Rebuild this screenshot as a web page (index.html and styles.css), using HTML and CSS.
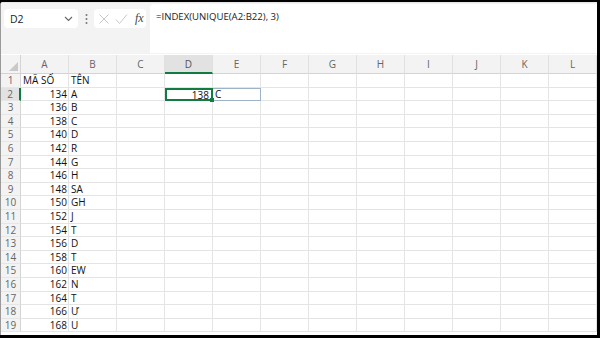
FILE: index.html
```html
<!DOCTYPE html>
<html lang="vi">
<head>
    <meta charset="UTF-8">
    <meta name="viewport" content="width=device-width, initial-scale=1.0">
    <title>Excel - UNIQUE</title>
    <link rel="stylesheet" href="styles.css">
</head>
<body>
    <div class="window">
        <div class="toolbar">
            <div class="name-box">
                <span>D2</span>
                <svg class="chevron" width="9" height="6" viewBox="0 0 9 6"><path d="M1 1l3.5 3.5L8 1" fill="none" stroke="#666" stroke-width="1.1"/></svg>
            </div>
            <div class="dots">
                <svg width="3" height="12" viewBox="0 0 3 12"><circle cx="1.5" cy="2" r="1" fill="#777"/><circle cx="1.5" cy="6" r="1" fill="#777"/><circle cx="1.5" cy="10" r="1" fill="#777"/></svg>
            </div>
            <div class="fx-box">
                <svg width="12" height="12" viewBox="0 0 12 12"><path d="M1.5 1.5l9 9M10.5 1.5l-9 9" stroke="#c8c8c8" stroke-width="1"/></svg>
                <svg width="13" height="12" viewBox="0 0 13 12"><path d="M1 6.5l3.5 4L12 1.5" fill="none" stroke="#c8c8c8" stroke-width="1"/></svg>
                <span class="fx">fx</span>
            </div>
            <div class="formula">=INDEX(UNIQUE(A2:B22), 3)</div>
        </div>

        <div class="sheet" id="sheet">
            <div class="corner"></div>
        </div>
    </div>

    <script>
        // Build the grid: header row + 19 data rows
        const cols = ["A","B","C","D","E","F","G","H","I","J","K","L"];
        const data = [
            ["MÃ SỐ", "TÊN"],
            [134, "A"], [136, "B"], [138, "C"], [140, "D"], [142, "R"],
            [144, "G"], [146, "H"], [148, "SA"], [150, "GH"], [152, "J"],
            [154, "T"], [156, "D"], [158, "T"], [160, "EW"], [162, "N"],
            [164, "T"], [166, "Ư"], [168, "U"]
        ];
        const sheet = document.getElementById("sheet");

        cols.forEach(c => {
            const h = document.createElement("div");
            h.className = "col-head" + (c === "D" ? " active" : "");
            h.textContent = c;
            sheet.appendChild(h);
        });

        data.forEach((row, i) => {
            const r = i + 1;
            const rh = document.createElement("div");
            rh.className = "row-head" + (r === 2 ? " active" : "");
            rh.textContent = r;
            sheet.appendChild(rh);

            cols.forEach((c, j) => {
                const cell = document.createElement("div");
                cell.className = "cell";
                let v = j < 2 ? row[j] : "";
                if (r === 2 && c === "D") { v = 138; cell.classList.add("selected"); }
                if (r === 2 && c === "E") { v = "C"; cell.classList.add("spill"); }
                if (typeof v === "number") cell.classList.add("num");
                cell.textContent = v;
                sheet.appendChild(cell);
            });
        });
    </script>
</body>
</html>
```

FILE: styles.css
```css
* {
    margin: 0;
    padding: 0;
    box-sizing: border-box;
}

body {
    background: #000;
    width: 600px;
    height: 338px;
    overflow: hidden;
    font-family: 'Open Sans', 'Noto Sans', sans-serif;
}

.window {
    margin: 2px 3px 3px 0;
    height: 333px;
    background: #fff;
    border-left: 1px solid #9a9a9a;
    border-top-left-radius: 3px;
    overflow: hidden;
}

/* Formula bar area */
.toolbar {
    height: 52px;
    background: #f3f3f3;
    display: flex;
    align-items: flex-start;
    padding: 1px 0 0 3px;
    border-top: 1px solid #e6e6e6;
}

.name-box {
    width: 74px;
    height: 19px;
    margin-top: 5px;
    background: #fff;
    border-radius: 4px;
    display: flex;
    align-items: center;
    justify-content: space-between;
    padding: 0 5px 0 6px;
    font-size: 10.5px;
    color: #222;
}

.dots {
    width: 16px;
    height: 19px;
    margin-top: 5px;
    display: flex;
    align-items: center;
    justify-content: center;
}

.fx-box {
    width: 52px;
    height: 19px;
    margin-top: 5px;
    background: #fff;
    border-radius: 4px;
    display: flex;
    align-items: center;
    gap: 5px;
    padding-left: 4px;
}

.fx {
    font-family: 'Liberation Serif', 'DejaVu Serif', serif;
    font-style: italic;
    font-size: 12px;
    color: #444;
    margin-left: 2px;
}

.formula {
    flex: 1;
    height: 49px;
    margin: 0 0 0 4px;
    background: #fff;
    border-top-left-radius: 4px;
    padding: 6px 0 0 6px;
    font-size: 9.6px;
    color: #222;
}

/* Grid */
.sheet {
    display: grid;
    grid-template-columns: 20px repeat(12, 48px);
    grid-template-rows: 19px repeat(19, 13.6px);
    margin-top: 1px;
    font-size: 10px;
    color: #111;
}

.corner {
    background: #f3f3f3;
    border-right: 1px solid #d4d4d4;
    border-bottom: 1px solid #d4d4d4;
    position: relative;
}

.corner::after {
    content: "";
    position: absolute;
    right: 2px;
    bottom: 2px;
    border-style: solid;
    border-width: 0 0 9px 9px;
    border-color: transparent transparent #c9c9c9 transparent;
}

.col-head {
    background: #f3f3f3;
    border-right: 1px solid #e0e0e0;
    border-bottom: 1px solid #d4d4d4;
    color: #666;
    text-align: center;
    line-height: 18px;
    font-size: 10px;
}

.col-head.active {
    background: #e2e2e2;
    border-bottom: 2px solid #107c41;
    color: #555;
}

.row-head {
    background: #f3f3f3;
    border-right: 1px solid #d4d4d4;
    border-bottom: 1px solid #e6e6e6;
    color: #666;
    text-align: center;
    line-height: 13px;
    font-size: 10px;
}

.row-head.active {
    background: #e2e2e2;
    border-right: 2px solid #107c41;
}

.cell {
    border-right: 1px solid #e4e4e4;
    border-bottom: 1px solid #e4e4e4;
    line-height: 13px;
    padding: 0 2px;
    white-space: nowrap;
    overflow: visible;
}

.cell.num {
    text-align: right;
    padding-right: 1px;
}

.cell.selected {
    border: 2px solid #107c41;
    line-height: 10px;
    padding-right: 2px;
    position: relative;
}

.cell.selected::after {
    content: "";
    position: absolute;
    right: -3px;
    bottom: -3px;
    width: 4px;
    height: 4px;
    background: #107c41;
}

.cell.spill {
    border: 1px solid #9fb3c8;
    border-left: none;
    line-height: 11px;
}
```
